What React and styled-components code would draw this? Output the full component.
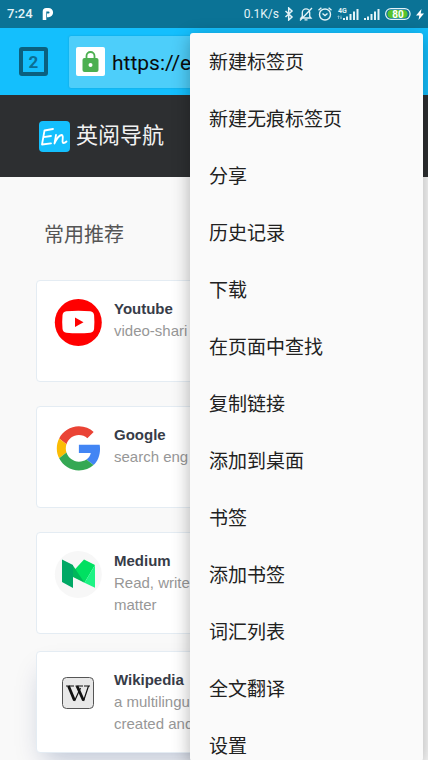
import styled, { createGlobalStyle } from "styled-components"

const GlobalStyle = createGlobalStyle`
    * {
        box-sizing: border-box;
    }
    body {
        margin: 0;
        background-color: #f9f9f9;
        font-family: "Liberation Sans", "Noto Sans CJK SC", sans-serif;
    }
`;

const Page = styled.div`
    position: relative;
    min-height: 100vh;
    overflow: hidden;
`;

const StatusBar = styled.div`
    display: flex;
    justify-content: space-between;
    align-items: center;
    height: 28px;
    padding: 0 4px 0 7px;
    background-color: #0b7396;
    color: #e4f3f7;
    font-family: Roboto, sans-serif;
`;
const StatusGroup = styled.div`
    display: flex;
    align-items: center;
    gap: ${(props) => props.$gap}px;
`;
const StatusText = styled.span`
    font-size: ${(props) => props.$size}px;
    font-weight: ${(props) => props.$weight || 400};
    line-height: 16px;
`;

const Toolbar = styled.div`
    display: flex;
    align-items: center;
    gap: 21px;
    height: 67px;
    padding: 0 20px 0 19px;
    background-color: #14bffd;
`;
const TabCount = styled.button`
    width: 29px;
    height: 29px;
    padding: 0;
    border: 4px solid #0b607f;
    border-radius: 3px;
    background-color: transparent;
    color: #0b6f94;
    font-family: Roboto, sans-serif;
    font-size: 17px;
    font-weight: 700;
    line-height: 20px;
    cursor: pointer;
`;
const AddressBar = styled.label`
    flex: 1;
    display: flex;
    align-items: center;
    gap: 7px;
    min-width: 0;
    height: 52px;
    padding: 0 7px;
    border-radius: 2px;
    background-color: #4dcefa;
    box-shadow: 0 0 2px rgba(0, 90, 130, 0.35);
`;
const LockBox = styled.span`
    display: flex;
    align-items: center;
    justify-content: center;
    flex: none;
    width: 29px;
    height: 29px;
    border-radius: 2px;
    background-color: white;
`;
const UrlInput = styled.input`
    flex: 1;
    min-width: 0;
    padding: 2px 0 0;
    border: none;
    outline: none;
    background-color: transparent;
    color: #0a0a0a;
    font-family: Roboto, sans-serif;
    font-size: 21px;
`;

const SiteHeader = styled.header`
    display: flex;
    align-items: center;
    gap: 6px;
    height: 82px;
    padding: 0 39px;
    background-color: #2d2f31;
`;
const SiteName = styled.h1`
    margin: 0;
    color: #f2f2f2;
    font-size: 22px;
    font-weight: 400;
    line-height: 32px;
`;

const Main = styled.main`
    padding: 42px 36px 8px;
`;
const SectionTitle = styled.h2`
    margin: 0 8px 29px;
    color: #555;
    font-size: 20px;
    font-weight: 400;
    line-height: 32px;
`;
const Card = styled.a`
    display: flex;
    gap: 12px;
    min-height: 102px;
    padding: 17px;
    margin-bottom: ${(props) => (props.$tight ? 17 : 24)}px;
    border: 1px solid #e4ecf3;
    border-radius: 4px;
    background-color: white;
    box-shadow: ${(props) => (props.$raised ? "0 14px 26px -8px rgba(0, 36, 100, 0.26)" : "none")};
    text-decoration: none;

    &:last-child {
        margin-bottom: 0;
    }
`;
const CardIcon = styled.span`
    flex: none;
    width: 48px;
    height: 48px;
`;
const CardText = styled.span`
    display: flex;
    flex-direction: column;
    font-size: 15px;
    line-height: 22px;
`;
const CardName = styled.strong`
    color: #373c48;
`;
const CardInfo = styled.span`
    color: #979797;
    white-space: pre-line;
`;

const Menu = styled.div`
    position: absolute;
    top: 33px;
    right: 5px;
    bottom: 0;
    width: 233px;
    overflow: hidden;
    border-radius: 3px;
    background-color: #fafafa;
    box-shadow: 0 4px 18px rgba(0, 0, 0, 0.3);
`;
const MenuItem = styled.button`
    display: block;
    width: 100%;
    height: 57px;
    padding: 0 19px 2px;
    border: none;
    background-color: transparent;
    color: #212121;
    font-family: "Noto Sans CJK SC", sans-serif;
    font-size: 19px;
    line-height: 28px;
    text-align: left;
    cursor: pointer;
`;

const ParkingLogo = () => (
    <svg width="12" height="14" viewBox="0 0 12 14">
        <path d="M2.500 13V4.500Q2.500 2.800 4.200 2.800H6.500a2.800 2.800 0 0 1 0 5.600H5" fill="none" stroke="white" strokeWidth="3.600" />
    </svg>
)

const Bluetooth = () => (
    <svg width="10" height="14" viewBox="0 0 10 14" fill="none" stroke="#e4f3f7" strokeWidth="1.500">
        <path d="M1.500 4l6.500 6-3.300 3V1L8 4l-6.500 6" />
    </svg>
)

const BellOff = () => (
    <svg width="14" height="14" viewBox="0 0 14 14" fill="none" stroke="#e4f3f7" strokeWidth="1.300">
        <path d="M2 11h10L10.700 9.500V5.500A3.700 3.700 0 0 0 3.300 5.500v4zM5.500 12.800h3M13 1L1 13.500" />
    </svg>
)

const Alarm = () => (
    <svg width="14" height="14" viewBox="0 0 14 14" fill="none" stroke="#e4f3f7" strokeWidth="1.400">
        <circle cx="7" cy="7.500" r="5.500" />
        <path d="M4.500 6.500L7 8.500l2.500-2M.5 3.200L3.400.7M13.500 3.200L10.600.7" />
    </svg>
)

const Signal = ({ data }) => (
    <svg width={data ? 22 : 16} height="14" viewBox={data ? "0 0 22 14" : "6 0 16 14"} fill="#e4f3f7">
        <path d="M6 11h2v2H6zM9 9.500h2V13H9zM12.500 7h2v6h-2zM16 4.500h2V13h-2zM19.500 2h2v11h-2z" />
        {data && <text x="1" y="6" fontSize="7" fontWeight="700">4G</text>}
        {data && <path d="M1.500 12V8.500M.5 9.500h2M4 8.500V12M3 11h2" stroke="#8fc0d0" strokeWidth=".8" />}
    </svg>
)

const Battery = () => (
    <svg width="26" height="12" viewBox="0 0 26 12">
        <rect x="2.500" y="2" width="20" height="8" rx="4" fill="#57c22d" />
        <rect x=".6" y=".6" width="24.500" height="10.800" rx="5.400" fill="none" stroke="#e4f3f7" strokeWidth="1.200" />
        <text x="13" y="9.500" fill="white" fontSize="10" fontWeight="700" textAnchor="middle">80</text>
    </svg>
)

const Bolt = () => (
    <svg width="8" height="11" viewBox="0 0 8 11" fill="white">
        <path d="M5.500 0L0 6.500h3.300L2.500 11 8 4.500H4.700z" />
    </svg>
)

const Lock = () => (
    <svg width="17" height="22" viewBox="0 0 17 22">
        <path d="M4.500 9V5a4 4 0 0 1 8 0V9" fill="none" stroke="#4caf50" strokeWidth="1.800" />
        <rect x=".5" y="7" width="16" height="14" rx="2" fill="#4caf50" />
        <circle cx="8.500" cy="14" r="2" fill="white" />
    </svg>
)

const SiteLogo = () => (
    <svg width="31" height="31" viewBox="0 0 31 31">
        <rect width="31" height="31" rx="4" fill="#14bffd" />
        <g fill="none" stroke="white" strokeWidth="1.800" strokeLinecap="round" strokeLinejoin="round">
            <path d="M14 8L5.500 9.500 3 23.500l9-1.200M4.500 16.200l7.500-1.200" />
            <path d="M17 14L15.500 22.500Q19 14.500 22.500 14C25.500 14 22 22 24.500 22q1.500 0 3-1.500" />
        </g>
    </svg>
)

const Youtube = () => (
    <svg width="48" height="48" viewBox="0 0 48 48">
        <circle cx="24.300" cy="24.500" r="23.500" fill="#f00" />
        <path d="M12.300 13.300q12-1.200 24 0 3.500.4 3.800 4 .6 6.700 0 13.400-.3 3.600-3.800 4-12 1.200-24 0-3.500-.4-3.800-4-.6-6.700 0-13.400.3-3.600 3.800-4z" fill="white" />
        <path d="M21 19.500v9.400l8.500-4.700z" fill="#f00" />
    </svg>
)

const Google = () => (
    <svg width="48" height="48" viewBox="0 0 48 48">
        <g transform="translate(2.800 2.300) scale(.92)">
            <path fill="#EA4335" d="M24 9.500c3.540 0 6.710 1.220 9.210 3.600l6.850-6.850C35.900 2.380 30.470 0 24 0 14.620 0 6.510 5.380 2.560 13.220l7.980 6.190C12.430 13.720 17.740 9.500 24 9.500z" />
            <path fill="#4285F4" d="M46.980 24.550c0-1.570-.15-3.090-.38-4.550H24v9.020h12.940c-.58 2.960-2.260 5.480-4.780 7.180l7.730 6c4.510-4.180 7.090-10.360 7.090-17.650z" />
            <path fill="#FBBC05" d="M10.530 28.590c-.48-1.450-.76-2.990-.76-4.590s.27-3.140.76-4.590l-7.980-6.190C.92 16.460 0 20.120 0 24c0 3.880.92 7.540 2.560 10.780l7.970-6.190z" />
            <path fill="#34A853" d="M24 48c6.480 0 11.930-2.130 15.890-5.810l-7.730-6c-2.150 1.450-4.920 2.300-8.160 2.300-6.260 0-11.570-4.220-13.470-9.910l-7.980 6.190C6.510 42.620 14.620 48 24 48z" />
        </g>
    </svg>
)

const Medium = () => (
    <svg width="48" height="48" viewBox="0 0 48 48">
        <circle cx="24.300" cy="24.500" r="23.500" fill="#f7f7f7" />
        <path d="M30 9.500l11 5.500-10.500 17.700L18.500 22z" fill="#00e061" />
        <path d="M41 15v22.700l-10.500-5z" fill="#1df384" />
        <path d="M19 15.500L30.500 32.700 19 27z" fill="#00b85a" />
        <path d="M8 9.500l11 5.500v23L8 32z" fill="#00a865" />
    </svg>
)

const Wikipedia = () => (
    <svg width="48" height="48" viewBox="0 0 48 48">
        <rect x="8.500" y="8.500" width="31" height="31" rx="4" fill="#e8e8e8" stroke="#555" />
        <g fill="none" stroke="#111">
            <path d="M12 17h8M21.500 17h7.500M30 17h6" strokeWidth="1.200" />
            <path d="M14.500 17l6 14.500M23 17l6.500 14.500" strokeWidth="2.800" />
            <path d="M20.500 32l6-13M29.500 32l5-15" strokeWidth="1.200" />
        </g>
    </svg>
)

const sites = [
    { name: "Youtube", info: "video-shari", icon: <Youtube /> },
    { name: "Google", info: "search eng", icon: <Google /> },
    { name: "Medium", info: "Read, write\nmatter", icon: <Medium />, tight: true },
    { name: "Wikipedia", info: "a multilingu\ncreated and", icon: <Wikipedia />, raised: true },
]

const menuItems = [
    "新建标签页",
    "新建无痕标签页",
    "分享",
    "历史记录",
    "下载",
    "在页面中查找",
    "复制链接",
    "添加到桌面",
    "书签",
    "添加书签",
    "词汇列表",
    "全文翻译",
    "设置",
]

const App = () => {
    return (
        <Page>
            <GlobalStyle />
            <StatusBar>
                <StatusGroup $gap={9}>
                    <StatusText $size={13} $weight={500}>7:24</StatusText>
                    <ParkingLogo />
                </StatusGroup>
                <StatusGroup $gap={5}>
                    <StatusText $size={12}>0.1K/s</StatusText>
                    <Bluetooth />
                    <BellOff />
                    <Alarm />
                    <Signal data />
                    <Signal />
                    <Battery />
                    <Bolt />
                </StatusGroup>
            </StatusBar>
            <Toolbar>
                <TabCount>2</TabCount>
                <AddressBar>
                    <LockBox><Lock /></LockBox>
                    <UrlInput aria-label="URL" defaultValue="https://e" />
                </AddressBar>
            </Toolbar>
            <SiteHeader>
                <SiteLogo />
                <SiteName>英阅导航</SiteName>
            </SiteHeader>
            <Main>
                <SectionTitle>常用推荐</SectionTitle>
                {sites.map((site) => (
                    <Card key={site.name} href="#" $tight={site.tight} $raised={site.raised}>
                        <CardIcon>{site.icon}</CardIcon>
                        <CardText>
                            <CardName>{site.name}</CardName>
                            <CardInfo>{site.info}</CardInfo>
                        </CardText>
                    </Card>
                ))}
            </Main>
            <Menu>
                {menuItems.map((item) => (
                    <MenuItem key={item}>{item}</MenuItem>
                ))}
            </Menu>
        </Page>
    )
}

export default App
